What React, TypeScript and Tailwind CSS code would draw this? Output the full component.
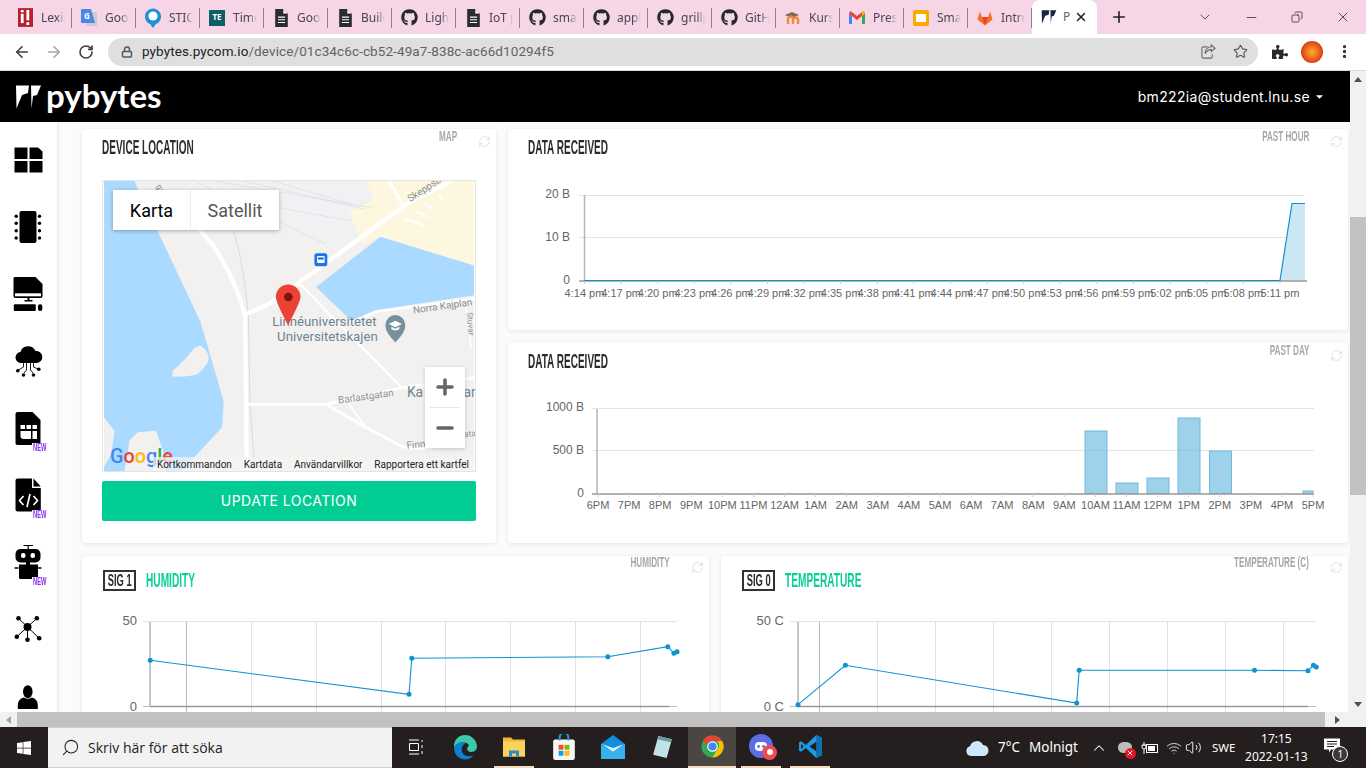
// Pybytes device page inside a Chrome window on Windows 10.
import type { ReactNode } from "react";
import {
  ArrowLeft, ArrowRight, RotateCw, Lock, Star, MoreVertical,
  ChevronDown, ChevronUp, Minus, Plus, X, Copy, RefreshCw, Search, Volume2, Wifi,
} from "lucide-react";
import { FaGithub, FaPuzzlePiece, FaWindows, FaCaretDown } from "react-icons/fa";

const SANS = "font-['Liberation_Sans',Arial,sans-serif]";

// --- favicons -------------------------------------------------------------

function DocIcon() {
  return (
    <svg viewBox="0 0 16 20" className="h-[18px] w-[15px]">
      <path d="M1 0h9l5 5v15H1z" fill="#2b2b2b" />
      <path d="M10 0v5h5z" fill="#fff" />
      <path d="M4 9h8M4 12h8M4 15h8" stroke="#fff" strokeWidth="1.2" />
    </svg>
  );
}

function PyMark({ color, className }: { color: string; className: string }) {
  return (
    <svg viewBox="0 0 25 24" className={className}>
      <path d="M0 .5H13L12 8 6 10 .5 23.500z" fill={color} />
      <path d="M15 .5H25L21 10 17 11 15.500 23.500z" fill={color} />
    </svg>
  );
}

function Favicon({ kind }: { kind: string }) {
  switch (kind) {
    case "lexin":
      return (
        <svg viewBox="0 0 16 20" className="h-[19px] w-[15px]">
          <rect width="16" height="20" fill="#b3222f" />
          <rect x="3" y="6" width="3" height="10" fill="#fff" />
          <rect x="3" y="2" width="3" height="2.5" fill="#fff" />
          <rect x="9" y="2" width="3" height="11" fill="#fff" />
          <rect x="9" y="15" width="3" height="3" fill="#fff" />
        </svg>
      );
    case "translate":
      return (
        <svg viewBox="0 0 16 18" className="h-[18px] w-[16px]">
          <rect x="5" y="3" width="11" height="14" rx="1" fill="#c9ccd1" />
          <path d="M1 0h9l4 14H1a1 1 0 0 1-1-1V1a1 1 0 0 1 1-1z" fill="#4a86e8" />
          <text x="3" y="10" fontSize="8" fill="#fff" fontWeight="700">G</text>
        </svg>
      );
    case "stic":
      return (
        <svg viewBox="0 0 16 20" className="h-[20px] w-[16px]">
          <path d="M8 20l-3-4a8 8 0 1 1 6 0z" fill="#1f8fd6" />
          <circle cx="8" cy="8" r="4.6" fill="#fff" />
        </svg>
      );
    case "te":
      return (
        <div className="flex h-4 w-4 items-center justify-center bg-[#0f5e66] text-[8px] font-bold text-white">TE</div>
      );
    case "doc":
      return <DocIcon />;
    case "github":
      return <FaGithub size={17} color="#24292e" />;
    case "kurs":
      return (
        <svg viewBox="0 0 16 16" className="h-4 w-4">
          <path d="M0 5l7-3 7 3-7 3z" fill="#7a6a55" />
          <path d="M3 14V8q3-3 5 0v6M8 9q3-3 5 0v5" fill="none" stroke="#ef8a3c" strokeWidth="2.4" />
        </svg>
      );
    case "gmail":
      return (
        <svg viewBox="0 0 16 13" className="h-[13px] w-4">
          <path d="M0 2v10a1 1 0 0 0 1 1h2V5z" fill="#4285f4" />
          <path d="M16 2v10a1 1 0 0 1-1 1h-2V5z" fill="#34a853" />
          <path d="M0 2l3 3 5 4 5-4 3-3-1.500-2L8 5 1.500 0z" fill="#ea4335" />
          <path d="M13 1v4l3-3-1.500-2z" fill="#fbbc04" />
        </svg>
      );
    case "slides":
      return (
        <svg viewBox="0 0 16 16" className="h-4 w-4">
          <rect width="16" height="16" rx="2" fill="#f9ab00" />
          <rect x="3" y="4" width="10" height="8" fill="#fff" />
        </svg>
      );
    case "gitlab":
      return (
        <svg viewBox="0 0 16 16" className="h-4 w-4">
          <path d="M8 15.500L0.500 9.500 2.800 1.500 5 7h6l2.200-5.500 2.300 8z" fill="#fc6d26" />
          <path d="M8 15.500L5 7h6z" fill="#e24329" />
        </svg>
      );
    default:
      return null;
  }
}

const TABS = [
  { title: "Lexin", icon: "lexin" },
  { title: "Goog", icon: "translate" },
  { title: "STIC", icon: "stic" },
  { title: "Time", icon: "te" },
  { title: "Goog", icon: "doc" },
  { title: "Build", icon: "doc" },
  { title: "Light", icon: "github" },
  { title: "IoT p", icon: "doc" },
  { title: "smar", icon: "github" },
  { title: "appl", icon: "github" },
  { title: "grillp", icon: "github" },
  { title: "GitH", icon: "github" },
  { title: "Kurs", icon: "kurs" },
  { title: "Pres", icon: "gmail" },
  { title: "Sma", icon: "slides" },
  { title: "Intro", icon: "gitlab" },
];

function TabStrip() {
  return (
    <div className="flex h-[34px] shrink-0 items-stretch bg-[#f5d5e6] pl-2 font-['Noto_Sans',sans-serif] text-xs text-[#4a4550]">
      {TABS.map((t, i) => (
        <div key={i} className="flex w-16 items-center pt-[1px]">
          <div className="flex h-5 w-[26px] shrink-0 items-center justify-center pl-2"><Favicon kind={t.icon} /></div>
          <span className="ml-[7px] w-[24px] overflow-hidden whitespace-nowrap [mask-image:linear-gradient(90deg,#000_65%,transparent)]">{t.title}</span>
          <div className="ml-auto h-5 w-px bg-[#8d8489]" />
        </div>
      ))}
      <div className="flex w-[65px] items-center rounded-t-lg bg-white pl-[9px]">
        <PyMark color="#1d2340" className="h-[14px] w-4" />
        <span className="ml-[6px] w-[7px] overflow-hidden text-[#5f6368]">P</span>
        <X size={14} strokeWidth={2.5} className="ml-[4px] text-[#222]" />
      </div>
      <div className="flex w-[44px] items-center justify-center"><Plus size={18} strokeWidth={2.2} className="text-[#222]" /></div>
      <div className="ml-auto flex items-center text-[#333]">
        <div className="flex w-[46px] justify-center"><ChevronDown size={16} strokeWidth={1.2} /></div>
        <div className="flex w-[46px] justify-center"><Minus size={15} strokeWidth={1.3} /></div>
        <div className="flex w-[46px] justify-center"><Copy size={12} strokeWidth={1.6} className="-scale-x-100" /></div>
        <div className="flex w-[46px] justify-center"><X size={16} strokeWidth={1.3} /></div>
      </div>
    </div>
  );
}

function Toolbar() {
  return (
    <div className="flex h-[37px] shrink-0 items-center border-b border-[#dcdcdc] bg-white pb-[1px]">
      <div className="flex w-[108px] items-center pl-[13px] text-[#3c4043]">
        <ArrowLeft size={18} strokeWidth={2.2} />
        <ArrowRight size={18} strokeWidth={2.2} className="ml-[14px] text-[#a4a6a8]" />
        <RotateCw size={16} strokeWidth={2.4} className="ml-[15px]" />
      </div>
      <div className="flex h-[28px] w-[1150px] items-center rounded-full bg-[#dfdfdf] pl-[13px] pr-[10px]">
        <Lock size={12} strokeWidth={3} className="text-[#55585c]" />
        <span className="ml-[9px] font-['Roboto',sans-serif] text-[13.5px] tracking-[0.1px] text-[#202124]">
          pybytes.pycom.io<span className="text-[#5f6368]">/device/01c34c6c-cb52-49a7-838c-ac66d10294f5</span>
        </span>
        <svg viewBox="0 0 16 16" className="ml-auto h-[15px] w-[15px]" fill="none" stroke="#686b6f" strokeWidth="1.2">
          <path d="M7 3H2.500A1.500 1.500 0 0 0 1 4.500v9A1.500 1.500 0 0 0 2.500 15h8a1.500 1.500 0 0 0 1.500-1.500V11" />
          <path d="M11 1l4 3.500L11 8V6Q6 6 4.500 10.500 4.500 3.500 11 3z" />
        </svg>
        <Star size={15} strokeWidth={1.8} className="ml-[17px] text-[#55585c]" />
      </div>
      <FaPuzzlePiece size={16} className="ml-[14px] text-[#26282b]" />
      <div className="ml-[13px] h-[22px] w-[22px] rounded-full bg-[radial-gradient(circle_at_50%_50%,#f9b233,#e8541a_55%,#8e1d0c)]" />
      <MoreVertical size={17} strokeWidth={2.6} className="ml-[13px] text-[#26282b]" />
    </div>
  );
}

// --- side navigation icons, drawn in page coordinates -----------------------

function NavIcon({ y, children, isNew }: { y: number; children: ReactNode; isNew?: boolean }) {
  return (
    <div className="relative flex h-[67px] items-center justify-center">
      <svg viewBox={`11 ${y} 36 36`} className="h-9 w-9 -translate-x-[0.5px]">{children}</svg>
      {isNew && (
        <span className={`absolute left-[32px] top-[49px] h-[9px] w-[15px] bg-white pl-[1px] text-[11px] font-bold leading-[9px] text-[#8b2cf5] ${SANS}`}>
          <span className="inline-block origin-left scale-x-[0.52] whitespace-nowrap">NEW</span>
        </span>
      )}
    </div>
  );
}

function SideNav() {
  return (
    <div className="z-10 h-full w-[57px] shrink-0 overflow-hidden bg-white pt-1 shadow-[1px_0_4px_rgba(0,0,0,0.1)]">
      <NavIcon y={141.5}>
        <path d="M15 147h13v11.500H15zM30 147h8.500l4.500 4v7.500H30zM15 160.500h13V172H15zM30 160.500h13V172H30z" />
      </NavIcon>
      <NavIcon y={208}>
        <rect x="20" y="210" width="17" height="32" rx="2" />
        {[215.3, 222.3, 229.7, 237].map((cy) => (
          <g key={cy}>
            <circle cx="16.700" cy={cy} r="1.700" />
            <circle cx="40" cy={cy} r="1.700" />
          </g>
        ))}
      </NavIcon>
      <NavIcon y={275}>
        <path d="M15 276h21l7 7v12a2 2 0 0 1-2 2H16a2 2 0 0 1-2-2v-18z" />
        <rect x="15.500" y="292.300" width="26" height="3" fill="#fff" />
        <rect x="28" y="297" width="2" height="2.500" />
        <rect x="25" y="299" width="8" height="1.500" />
        <rect x="14.300" y="303.300" width="22" height="6.700" rx="1" />
        <rect x="38.500" y="303.300" width="4.300" height="6.700" rx="2" />
      </NavIcon>
      <NavIcon y={342}>
        <path d="M22 362a5.500 5.500 0 0 1-1-11 8 8 0 0 1 15-1 6 6 0 0 1 1.500 12z" />
        <path d="M24 360v6l-5 3M27 360v9l-2.500 3M31 360v9l2.500 3M34 360v6l4.500 2" fill="none" stroke="#000" strokeWidth="0.9" />
        <circle cx="18.300" cy="369.800" r="1.800" />
        <circle cx="24" cy="374" r="1.800" />
        <circle cx="34" cy="374" r="1.800" />
        <circle cx="39.300" cy="368.300" r="1.800" />
      </NavIcon>
      <NavIcon y={409} isNew>
        <path d="M18 411h15l8 8v23a2 2 0 0 1-2 2H18a2 2 0 0 1-2-2v-29a2 2 0 0 1 2-2z" />
        <path d="M21 424h4.500v4H21zM27 424h4.500v4H27zM33 424h4.500v4H33zM21 430h10.500v8H24a3 3 0 0 1-3-3zM33 430h4.500v8H33z" fill="#fff" />
      </NavIcon>
      <NavIcon y={476} isNew>
        <path d="M18 477.500h14.500V487H41.300v21.500a2 2 0 0 1-2 2H18a2 2 0 0 1-2-2v-29a2 2 0 0 1 2-2z" />
        <path d="M34 477.500l7.300 8H34z" />
        <path d="M24 495l-4 4.500 4 4.500M34 495l4 4.500-4 4.500M30.500 493l-3 13" fill="none" stroke="#fff" strokeWidth="1.700" />
      </NavIcon>
      <NavIcon y={543} isNew>
        <path d="M24 544.500h9.500M28.700 544.500v4" stroke="#000" strokeWidth="1.200" fill="none" />
        <rect x="16" y="548" width="25" height="13.500" rx="5" />
        <rect x="21.500" y="552" width="4.500" height="5" rx="2" fill="#fff" />
        <rect x="31" y="552" width="4.500" height="5" rx="2" fill="#fff" />
        <rect x="26.500" y="561" width="4" height="3" />
        <path d="M19.500 563.500h19v13a1.500 1.500 0 0 1-1.500 1.500H21a1.500 1.500 0 0 1-1.500-1.500z" />
        <path d="M15 567h4M38.500 567H42" stroke="#000" strokeWidth="1.500" />
      </NavIcon>
      <NavIcon y={610}>
        <path d="M28 626L19 617.300M28 626l9.300-8.700M28 626l-10.700 9.700M28 626v12.700M28 626l11.700 11.300" stroke="#000" strokeWidth="1" />
        <circle cx="28" cy="626" r="4" />
        <circle cx="19" cy="617.300" r="2.300" />
        <circle cx="37.300" cy="617.300" r="2.300" />
        <circle cx="17.300" cy="635.700" r="2.300" />
        <circle cx="28" cy="638.700" r="2.300" />
        <circle cx="39.700" cy="637.300" r="2.300" />
      </NavIcon>
      <NavIcon y={677}>
        <ellipse cx="28.300" cy="690.700" rx="4.800" ry="6.500" />
        <path d="M18.300 708v-4q0-6 6-7.500 4 2.500 8 0 6 1.500 6 7.500v4z" />
      </NavIcon>
    </div>
  );
}

// --- card furniture ---------------------------------------------------------

function Condensed({ children, className }: { children: ReactNode; className?: string }) {
  return <span className={`inline-block whitespace-nowrap font-bold ${SANS} ${className ?? ""}`}>{children}</span>;
}

function CardLabel({ label, className }: { label: string; className?: string }) {
  return (
    <div className={`ml-auto flex items-start ${className ?? ""}`}>
      <Condensed className="-mt-[2px] origin-right scale-x-[0.58] text-[14px] leading-[16px] text-[#a8a8a8]">{label}</Condensed>
      <RefreshCw size={13} strokeWidth={1.6} className="ml-[21px] mt-[5px] text-[#dcdcdc]" />
    </div>
  );
}

function CardTitle({ children }: { children: string }) {
  return <Condensed className="origin-left scale-x-[0.514] text-[19.5px] leading-[20px] text-[#2b2b2b]">{children}</Condensed>;
}

function SigTitle({ sig, name, label }: { sig: string; name: string; label?: string }) {
  return (
    <div className="flex h-[44px] pl-[21px] pr-[5px] pt-[6px]">
      <div className="mt-[8px] flex h-[21px] w-[33px] items-center justify-center overflow-hidden border-2 border-[#333]">
        <Condensed className="scale-x-[0.55] text-[17px] leading-[18px] text-[#2b2b2b]">{sig}</Condensed>
      </div>
      <Condensed className="ml-[10px] mt-[8px] origin-left scale-x-[0.52] text-[19.5px] leading-[20px] text-[#0ccf97]">{name}</Condensed>
      <CardLabel label={label ?? name} className="-mt-[6px]" />
    </div>
  );
}

const cardClass = "rounded-[4px] bg-white shadow-[0_1px_5px_rgba(0,0,0,0.09)]";

// --- map --------------------------------------------------------------------

function MapView() {
  return (
    <div className="relative mx-5 h-[292px] overflow-hidden border border-[#e4e4e4] font-['Roboto',sans-serif]">
      <svg viewBox="8 14 1120 878" className="block h-full w-full" fontFamily="Roboto, sans-serif">
        <rect x="8" y="14" width="1120" height="878" fill="#f2f1ef" />
        <path d="M340 14H800L825 70 750 110 790 205 680 210z" fill="#f0f1f3" />
        <path d="M800 14H1128V270L845 183 790 205 750 110 825 70z" fill="#fef7e0" />
        <path d="M8 14H100L170 165 300 440 370 680 365 760 300 830 240 892H8z" fill="#aadaff" />
        <path d="M8 730L40 770 30 840 8 880z" fill="#f2f1ef" />
        <path d="M85 800L110 775 165 770 190 840 195 892H70z" fill="#f2f1ef" />
        <path d="M845 183L1128 270V360L830 405 760 440 650 335z" fill="#aadaff" />
        <path d="M300 512Q325 530 325 550T290 600Q240 610 215 605V590Q260 550 280 520z" fill="#f2f1ef" />
        <g stroke="#d9dbdf" strokeWidth="2" fill="none">
          <path d="M340 14L820 95M430 14L800 100M520 14L760 85M280 14L680 205M350 60L755 135" />
          <path d="M400 165Q430 260 445 420L450 690 465 892" strokeWidth="3" />
        </g>
        <g stroke="#fff" fill="none" strokeLinecap="round" strokeLinejoin="round">
          <path d="M300 165Q385 250 435 420L440 892" strokeWidth="13" />
          <path d="M440 415Q530 385 600 320L930 80 1060 14" strokeWidth="13" />
          <path d="M870 14L910 80" strokeWidth="9" />
          <path d="M600 325L910 640" strokeWidth="7" />
          <path d="M440 690H680L910 640 1128 610" strokeWidth="9" />
          <path d="M680 690L800 760 915 820 1000 825" strokeWidth="9" />
          <path d="M750 690L800 760" strokeWidth="6" />
          <path d="M760 440L830 410 1128 370" strokeWidth="8" />
          <path d="M1105 400L1120 520" strokeWidth="5" />
          <path d="M920 130L975 148M950 105L985 122M980 85L1000 95M1025 60L1032 72" strokeWidth="6" />
        </g>
        <rect x="645" y="233" width="39" height="39" rx="7" fill="#1a73e8" />
        <rect x="653" y="241" width="23" height="21" rx="3" fill="#fff" />
        <rect x="656" y="245" width="17" height="7" fill="#1a73e8" />
        <g fill="#6e8494" fontSize="40">
          <text x="517" y="453">Linnéuniversitetet</text>
          <text x="532" y="497">Universitetskajen</text>
        </g>
        <path d="M890 503Q858 470 860 450a30 30 0 0 1 60 0Q922 470 890 503z" fill="#78909c" />
        <path d="M870 447l20-10 20 10-20 10zM878 455v8q12 7 24 0v-8l-12 6z" fill="#fff" />
        <g fill="#8a8f94" fontSize="30">
          <text x="945" y="415" transform="rotate(-8 945 415)">Norra Kajplan</text>
          <text x="935" y="78" transform="rotate(-33 935 78)">Skeppsbr</text>
          <text x="718" y="688" transform="rotate(-8 718 688)">Barlastgatan</text>
          <text x="925" y="825" transform="rotate(-6 925 825)">Finn</text>
          <text x="1098" y="790" fontSize="26" transform="rotate(-6 1098 790)">ata</text>
          <text x="1106" y="412" transform="rotate(85 1106 412)" fontSize="25">Stuvar</text>
          <text x="165" y="30" transform="rotate(60 165 30)" fontSize="25">gade</text>
        </g>
        <text x="925" y="668" fontSize="42" fill="#6e8494">Ka</text>
        <text x="1096" y="668" fontSize="42" fill="#6e8494">an</text>
        <path d="M565 450Q530 385 528 365a37 37 0 0 1 75 0Q600 385 565 450z" fill="#ea4335" />
        <circle cx="566" cy="365" r="13" fill="#7d1410" />
        <text x="26" y="868" fontSize="60" fontWeight="500">
          <tspan fill="#4285f4">G</tspan><tspan fill="#ea4335">o</tspan><tspan fill="#fbbc04">o</tspan><tspan fill="#4285f4">g</tspan><tspan fill="#34a853">l</tspan><tspan fill="#ea4335">e</tspan>
        </text>
      </svg>

      <div className="absolute left-[10px] top-[9px] flex h-10 text-[18px] shadow-[0_1px_4px_rgba(0,0,0,0.3)]">
        <div className="flex w-[77px] items-center justify-center bg-white text-black">Karta</div>
        <div className="flex w-[89px] items-center justify-center border-l border-[#eee] bg-white text-[#565656]">Satellit</div>
      </div>

      <div className="absolute left-[322px] top-[186px] flex w-10 flex-col items-center bg-white shadow-[0_1px_4px_rgba(0,0,0,0.2)]">
        <div className="flex h-10 w-full items-center justify-center"><Plus size={24} strokeWidth={3.6} className="text-[#666]" /></div>
        <div className="h-px w-[30px] bg-[#e6e6e6]" />
        <div className="flex h-10 w-full items-center justify-center"><Minus size={24} strokeWidth={3.6} className="text-[#666]" /></div>
      </div>

      <div className="absolute bottom-0 right-0 flex h-[14px] w-[322px] items-center justify-between bg-[rgba(245,245,245,0.7)] pl-[4px] pr-[6px] pt-[1px] text-[10px] leading-[14px] text-[#222]">
        <span>Kortkommandon</span>
        <span>Kartdata</span>
        <span>Användarvillkor</span>
        <span>Rapportera ett kartfel</span>
      </div>
    </div>
  );
}

// --- charts, drawn in page coordinates ---------------------------------------

const LINE_AXIS = "#b5b5b5";
const GRID = "#e4e4e4";

function HourChart() {
  const labels = ["4:14", "4:17", "4:20", "4:23", "4:26", "4:29", "4:32", "4:35", "4:38", "4:41", "4:44", "4:47", "4:50", "4:53", "4:56", "4:59", "5:02", "5:05", "5:08", "5:11"];
  return (
    <svg viewBox="508 169 840 161" className="block h-[161px] w-[840px]" fontFamily="'Liberation Sans', Arial, sans-serif">
      <path d="M579 195.500H1305M579 237.500H1305" stroke={GRID} />
      <path d="M1280 280.500L1292 203.500H1305V280.500z" fill="#cde6f4" />
      <path d="M584.500 195V281" stroke={LINE_AXIS} strokeWidth="1.500" />
      <path d="M579 281H1307" stroke="#999" strokeWidth="1.500" />
      <path d="M584 280.500H1280L1292 203.500H1305" fill="none" stroke="#0d94cf" strokeWidth="1.200" />
      {labels.map((l, i) => (
        <g key={l}>
          <path d={`M${584.5 + i * 36.6} 281v3`} stroke="#ccc" />
          <text x={584.5 + i * 36.6} y="297" textAnchor="middle" fontSize="11" fill="#666">{l} pm</text>
        </g>
      ))}
      <g fontSize="12" fill="#666" textAnchor="end">
        <text x="570" y="198">20 B</text>
        <text x="570" y="241">10 B</text>
        <text x="570" y="284">0</text>
      </g>
    </svg>
  );
}

function DayChart() {
  const labels = ["6PM", "7PM", "8PM", "9PM", "10PM", "11PM", "12AM", "1AM", "2AM", "3AM", "4AM", "5AM", "6AM", "7AM", "8AM", "9AM", "10AM", "11AM", "12PM", "1PM", "2PM", "3PM", "4PM", "5PM"];
  const bars = [
    [1085, 22, 431],
    [1116, 22, 483],
    [1147, 22, 478],
    [1178, 22, 418],
    [1209.5, 22, 451],
    [1303, 10, 491],
  ];
  return (
    <svg viewBox="508 382 840 161" className="block h-[161px] w-[840px]" fontFamily="'Liberation Sans', Arial, sans-serif">
      <path d="M592 408.500H1314M592 450.500H1314" stroke={GRID} />
      {bars.map(([x, w, top]) => (
        <rect key={x} x={x} y={top} width={w} height={493.5 - top} fill="#6cb9e0" fillOpacity="0.65" stroke="#6cb9e0" />
      ))}
      <path d="M597 409V494" stroke={LINE_AXIS} strokeWidth="1.500" />
      <path d="M592 494H1314" stroke="#999" strokeWidth="1.500" />
      {labels.map((l, i) => (
        <g key={l}>
          <path d={`M${598 + i * 31.09} 494v3`} stroke="#ccc" />
          <text x={598 + i * 31.09} y="509" textAnchor="middle" fontSize="11" fill="#666">{l}</text>
        </g>
      ))}
      <g fontSize="12" fill="#666" textAnchor="end">
        <text x="584" y="411">1000 B</text>
        <text x="584" y="454">500 B</text>
        <text x="584" y="497">0</text>
      </g>
    </svg>
  );
}

function SignalChart({ viewX, axisX, gridFrom, gridTo, axisEnd, verticals, points, top, bottom }: {
  viewX: number;
  axisX: number;
  gridFrom: number;
  gridTo: number;
  axisEnd: number;
  verticals: number[];
  points: number[][];
  top: string;
  bottom: string;
}) {
  const line = points.map((p) => p.join(",")).join(" ");
  return (
    <svg viewBox={`${viewX} 600 627 120`} className="block h-[120px] w-[627px]" fontFamily="'Liberation Sans', Arial, sans-serif">
      <path d={`M${gridFrom} 621.500H${gridTo}`} stroke={GRID} />
      {verticals.map((x, i) => (
        <path key={x} d={`M${x} 622V712`} stroke={i === 0 ? "#b9b9b9" : "#e2e2e2"} />
      ))}
      <path d={`M${gridFrom} 706.500H${gridTo}`} stroke="#bbb" />
      <path d={`M${axisX} 706.500H${axisEnd}`} stroke="#999" strokeWidth="1.500" />
      <path d={`M${axisX} 622V707`} stroke={LINE_AXIS} strokeWidth="1.500" />
      <polyline points={line} fill="none" stroke="#0d94cf" strokeWidth="1.100" />
      {points.map(([x, y]) => (
        <circle key={x} cx={x} cy={y} r="2.500" fill="#0d94cf" />
      ))}
      <g fontSize="13" fill="#666" textAnchor="end">
        <text x={gridFrom - 6} y="625">{top}</text>
        <text x={gridFrom - 6} y="711">{bottom}</text>
      </g>
    </svg>
  );
}

function Page() {
  return (
    <div className="flex min-w-0 flex-1 flex-col overflow-hidden bg-[#fbfbfb]">
      <div className="flex h-[51px] shrink-0 items-center bg-black pl-[16px] pr-[25px] text-white">
        <PyMark color="#fff" className="mt-[1px] h-[24px] w-[25px]" />
        <span className="-mt-[3px] ml-[5px] font-['Lato',sans-serif] text-[33px] font-bold leading-none">pybytes</span>
        <span className="ml-auto font-['Inter',sans-serif] text-sm tracking-[0.35px]">bm222ia@student.lnu.se</span>
        <FaCaretDown size={11} className="ml-[4px]" />
      </div>
      <div className="flex min-h-0 flex-1 overflow-hidden">
        <SideNav />
        <div className="flex min-w-0 flex-1 flex-col gap-[13px] overflow-hidden pl-[25px] pr-[2px] pt-[7px]">
          <div className="flex shrink-0 gap-3">
            <div className={`h-[414px] w-[414px] shrink-0 ${cardClass}`}>
              <div className="flex h-[51px] pl-5 pr-[5px] pt-[8px]">
                <CardTitle>DEVICE LOCATION</CardTitle>
                <CardLabel label="MAP" className="-mt-[7px]" />
              </div>
              <MapView />
              <button className="mx-5 mt-[9px] flex h-10 w-[374px] items-center justify-center rounded-[2px] bg-[#00cc93] font-['Inter',sans-serif] text-sm tracking-[0.45px] text-white">
                UPDATE LOCATION
              </button>
            </div>
            <div className="flex w-[840px] shrink-0 flex-col gap-3">
              <div className={`h-[201px] ${cardClass}`}>
                <div className="flex h-10 pl-5 pr-[5px] pt-[8px]">
                  <CardTitle>DATA RECEIVED</CardTitle>
                  <CardLabel label="PAST HOUR" className="-mt-[7px]" />
                </div>
                <HourChart />
              </div>
              <div className={`h-[201px] ${cardClass}`}>
                <div className="flex h-10 pl-5 pr-[5px] pt-[9px]">
                  <CardTitle>DATA RECEIVED</CardTitle>
                  <CardLabel label="PAST DAY" className="-mt-[7px]" />
                </div>
                <DayChart />
              </div>
            </div>
          </div>
          <div className="flex shrink-0 gap-3">
            <div className={`w-[627px] shrink-0 ${cardClass}`}>
              <SigTitle sig="SIG 1" name="HUMIDITY" />
              <SignalChart
                viewX={82}
                axisX={150}
                gridFrom={143}
                gridTo={677}
                axisEnd={669}
                verticals={[186.5, 251.5, 316.5, 381.5, 445.5, 510.5, 575.5, 640.5]}
                points={[[150.2, 660.3], [409, 694.3], [411.8, 658.3], [607.8, 656.7], [667.8, 646.7], [673.9, 653.3], [677, 651.7]]}
                top="50"
                bottom="0"
              />
            </div>
            <div className={`w-[627px] shrink-0 ${cardClass}`}>
              <SigTitle sig="SIG 0" name="TEMPERATURE" label="TEMPERATURE (C)" />
              <SignalChart
                viewX={721}
                axisX={798}
                gridFrom={790}
                gridTo={1316}
                axisEnd={1308}
                verticals={[819.5, 877.5, 935.5, 993.5, 1051.5, 1109.5, 1167.5, 1225.5, 1283.5]}
                points={[[798, 704.7], [845.4, 665.3], [1076.7, 703], [1079.2, 670.3], [1254.5, 670.3], [1308, 670.7], [1313.4, 665.3], [1316.3, 667]]}
                top="50 C"
                bottom="0 C"
              />
            </div>
          </div>
        </div>
      </div>
    </div>
  );
}

function VerticalScrollbar() {
  return (
    <div className="flex w-4 shrink-0 flex-col bg-[#f1f1f1]">
      <div className="flex h-[16px] items-center justify-center text-[#555]">
        <div className="h-0 w-0 border-x-[4px] border-b-[5px] border-x-transparent border-b-[#505050]" />
      </div>
      <div className="mt-[130px] h-[278px] bg-[#c1c1c1]" />
      <div className="mt-auto flex h-[16px] items-center justify-center">
        <div className="h-0 w-0 border-x-[4px] border-t-[5px] border-x-transparent border-t-[#505050]" />
      </div>
    </div>
  );
}

function HorizontalScrollbar() {
  return (
    <div className="flex h-[15px] shrink-0 items-center bg-[#f1f1f1]">
      <div className="flex w-[17px] justify-center">
        <div className="h-0 w-0 border-y-[4px] border-r-[5px] border-y-transparent border-r-[#a3a3a3]" />
      </div>
      <div className="h-full w-[1308px] bg-[#c1c1c1]" />
      <div className="flex w-[25px] justify-center">
        <div className="h-0 w-0 border-y-[4px] border-l-[5px] border-y-transparent border-l-[#505050]" />
      </div>
    </div>
  );
}

// --- taskbar ----------------------------------------------------------------

function TaskSlot({ children, width, active, running }: { children: ReactNode; width: string; active?: boolean; running?: boolean }) {
  return (
    <div className={`flex h-full flex-col items-center ${width} ${active ? "bg-[#4a4644]" : ""}`}>
      <div className="flex min-h-0 w-full flex-1 items-center justify-center">{children}</div>
      <div className={`h-[2px] shrink-0 ${active ? "w-full" : "w-10"} ${running ? "bg-[#fbd9bd]" : ""}`} />
    </div>
  );
}

function Taskbar() {
  return (
    <div className="flex h-[41px] shrink-0 items-center bg-[#241f1e] font-['Noto_Sans',sans-serif] text-white">
      <div className="flex h-full w-12 items-center justify-center"><FaWindows size={16} /></div>
      <div className="flex h-full w-[344px] items-center border-y border-[#cfcfcf] bg-[#f2f2f2] pl-[13px] text-[#222]">
        <Search size={19} strokeWidth={1.3} className="-scale-x-100" />
        <span className="ml-[8px] font-['Open_Sans',sans-serif] text-sm">Skriv här för att söka</span>
      </div>
      <TaskSlot width="w-[48px]">
        <svg viewBox="0 0 16 16" className="h-4 w-4" fill="none" stroke="#fff" strokeWidth="1">
          <path d="M1 1h10M1 15h10M1.500 4.500h9v7h-9zM14 1v2M14 6v3M14 12v3" />
        </svg>
      </TaskSlot>
      <TaskSlot width="w-[50px]">
        <svg viewBox="0 0 24 24" className="h-[26px] w-[26px]">
          <path d="M12 1a11 11 0 0 1 11 11c0 3-3 5-6 4.500-3-.5-4-3-2-5 1-1 .5-3-3-3.500C7 7.500 3 10 2 13 1 6 6 1 12 1z" fill="#3bc9a8" />
          <path d="M2 13c-.5 6 5 10.500 10 10.500 3 0 6-1.500 8-4-4 2-9 1-10.500-2.500C8 13 10 9 13.500 8 8 6 2.500 9 2 13z" fill="#0f7fd1" />
        </svg>
      </TaskSlot>
      <TaskSlot width="w-[48px]" running>
        <svg viewBox="0 0 24 22" className="h-[23px] w-[24px]">
          <path d="M1 2h8l2 2h12v17H1z" fill="#f0b73a" />
          <rect x="1" y="6" width="22" height="15" fill="#fbd35a" />
          <path d="M7 21v-6h10v6h-3v-3h-4v3z" fill="#2b88d8" />
        </svg>
      </TaskSlot>
      <TaskSlot width="w-[51px]">
        <svg viewBox="0 0 20 24" className="h-[26px] w-[22px]">
          <rect x="0" y="5" width="20" height="19" rx="2" fill="#f6f6f6" />
          <path d="M6 6V3a4 4 0 0 1 8 0v3" fill="none" stroke="#18a0d8" strokeWidth="1.800" />
          <rect x="5" y="10" width="4.500" height="4.500" fill="#f25022" />
          <rect x="10.500" y="10" width="4.500" height="4.500" fill="#7fba00" />
          <rect x="5" y="15.500" width="4.500" height="4.500" fill="#00a4ef" />
          <rect x="10.500" y="15.500" width="4.500" height="4.500" fill="#ffb900" />
        </svg>
      </TaskSlot>
      <TaskSlot width="w-[48px]">
        <svg viewBox="0 0 24 24" className="h-[24px] w-[24px]">
          <path d="M0 9L12 0l12 9v15H0z" fill="#0f8ee0" />
          <path d="M1 9l11 8 11-8-11 4z" fill="#d8f0fb" />
          <path d="M0 9l12 8 12-8v15H0z" fill="#39b1ec" />
        </svg>
      </TaskSlot>
      <TaskSlot width="w-[51px]">
        <svg viewBox="0 0 20 24" className="h-[25px] w-[21px]">
          <path d="M6 2l13 3-5 18-13-3z" fill="#bfe3e8" />
          <path d="M6 2l13 3-1 3-13-3z" fill="#6b9aa3" />
        </svg>
      </TaskSlot>
      <TaskSlot width="w-[48px]" active running>
        <svg viewBox="0 0 24 24" className="h-[23px] w-[23px]">
          <circle cx="12" cy="12" r="11.500" fill="#34a853" />
          <path d="M12 .5a11.500 11.500 0 0 1 10 5.750H12a5.800 5.800 0 0 0-5.600 4.200L2 6A11.500 11.500 0 0 1 12 .5z" fill="#ea4335" />
          <path d="M22 6.250A11.500 11.500 0 0 1 12 23.500l4.900-8.500a5.800 5.800 0 0 0 0-8.750z" fill="#fbbc04" />
          <circle cx="12" cy="12" r="5.500" fill="#fff" />
          <circle cx="12" cy="12" r="4.300" fill="#4285f4" />
        </svg>
      </TaskSlot>
      <TaskSlot width="w-[50px]" running>
        <div className="relative h-[26px] w-[24px]">
          <svg viewBox="0 0 24 24" className="h-[24px] w-[24px]">
            <circle cx="12" cy="12" r="12" fill="#5b6ee8" />
            <rect x="6" y="8" width="12" height="9" rx="4" fill="#fff" />
            <circle cx="9.500" cy="12.500" r="1.400" fill="#5b6ee8" />
            <circle cx="14.500" cy="12.500" r="1.400" fill="#5b6ee8" />
          </svg>
          <div className="absolute bottom-0 right-[-4px] flex h-[15px] w-[15px] items-center justify-center rounded-full bg-[#ee4c50]">
            <div className="h-[6px] w-[6px] rounded-full bg-white" />
          </div>
        </div>
      </TaskSlot>
      <TaskSlot width="w-[48px]" running>
        <svg viewBox="0 0 24 24" className="h-[25px] w-[25px]">
          <path d="M17.500 1L23 3.500v17L17.500 23 7.500 13.500 3 17l-2-1V8l2-1 4.500 3.500z" fill="#1e9ae0" />
          <path d="M17.500 1v22l5.500-2.500v-17z" fill="#0e6fb5" />
          <path d="M17.500 7.500L11 12l6.500 4.500z" fill="#241f1e" />
          <path d="M3 9.500L5.500 12 3 14.500z" fill="#241f1e" />
        </svg>
      </TaskSlot>
      <div className="ml-[131px] flex h-full items-center">
        <svg viewBox="0 0 24 16" className="h-[18px] w-[24px]">
          <path d="M6 16a5 5 0 0 1-1-9.800A7 7 0 0 1 18 5a5.500 5.500 0 0 1 0 11z" fill="#cfe7fa" />
        </svg>
        <span className="ml-[9px] text-[13.5px]">7°C</span>
        <span className="ml-[9px] text-[13.5px]">Molnigt</span>
        <ChevronUp size={18} strokeWidth={1.4} className="ml-[12px]" />
        <div className="relative ml-[10px] h-4 w-4">
          <div className="h-[11px] w-[14px] translate-y-[2px] rounded-full bg-[#bdbdbd]" />
          <div className="absolute -bottom-[3px] -right-[2px] flex h-[11px] w-[11px] items-center justify-center rounded-full bg-[#e81123] text-[8px] leading-none">
            <X size={8} strokeWidth={3} />
          </div>
        </div>
        <svg viewBox="0 0 18 14" className="ml-[7px] h-[14px] w-[18px]" fill="none" stroke="#fff">
          <rect x="5.500" y="3.500" width="11" height="8" />
          <rect x="7" y="5" width="7" height="5" fill="#fff" stroke="none" />
          <path d="M3 1v4M1 4h4v2a2 2 0 0 1-4 0zM3 8v5" strokeWidth="1" />
        </svg>
        <Wifi size={16} strokeWidth={1.4} className="ml-[7px] text-[#dcdcdc]" />
        <Volume2 size={17} strokeWidth={1.3} className="ml-[3px]" />
        <span className="ml-[10px] text-[11.5px]">SWE</span>
        <div className="ml-[7px] flex w-[68px] flex-col items-center whitespace-nowrap text-[12px] leading-[18px]">
          <span>17:15</span>
          <span>2022-01-13</span>
        </div>
        <div className="relative ml-[14px] h-5 w-5">
          <svg viewBox="0 0 16 14" className="h-[15px] w-[16px]">
            <path d="M0 0h16v11H7l-2 3v-3H0z" fill="#fff" />
            <path d="M3 3h10M3 5.500h10M3 8h7" stroke="#241f1e" />
          </svg>
          <div className="absolute -bottom-[4px] right-[-4px] flex h-[16px] w-[16px] items-center justify-center rounded-full border border-white bg-[#3a3a3a] text-[10px] leading-none">1</div>
        </div>
      </div>
    </div>
  );
}

export default function App() {
  return (
    <div className="flex h-screen w-[1366px] flex-col overflow-hidden bg-white">
      <TabStrip />
      <Toolbar />
      <div className="flex min-h-0 flex-1">
        <Page />
        <VerticalScrollbar />
      </div>
      <HorizontalScrollbar />
      <Taskbar />
    </div>
  );
}
